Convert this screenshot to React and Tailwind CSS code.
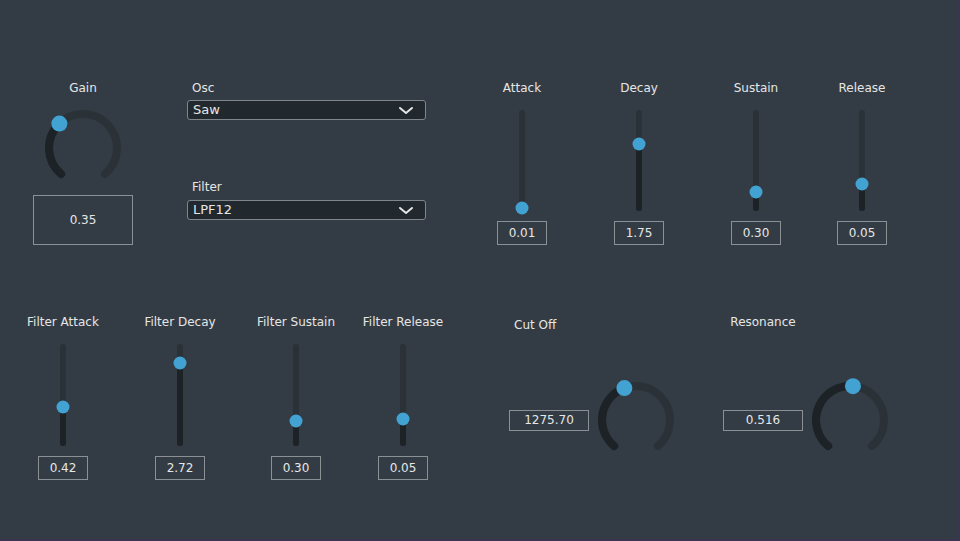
import React from 'react';

const polar = (cx, cy, r, deg) => {
    const a = ((deg - 90) * Math.PI) / 180;
    return [cx + r * Math.cos(a), cy + r * Math.sin(a)];
};

const arc = (cx, cy, r, start, end) => {
    const [x1, y1] = polar(cx, cy, r, start);
    const [x2, y2] = polar(cx, cy, r, end);
    const large = end - start > 180 ? 1 : 0;
    return `M ${x1} ${y1} A ${r} ${r} 0 ${large} 1 ${x2} ${y2}`;
};

function Knob({ angle }) {
    const [tx, ty] = polar(40, 40, 34, angle);
    return (
        <svg width="80" height="80" viewBox="0 0 80 80" className="shrink-0 overflow-visible">
            <path d={arc(40, 40, 34, -140, 140)} fill="none" stroke="#2a3238" strokeWidth="8" strokeLinecap="round" />
            <path d={arc(40, 40, 34, -140, angle)} fill="none" stroke="#1c2226" strokeWidth="8" strokeLinecap="round" />
            <circle cx={tx} cy={ty} r="8" fill="#42a3d2" />
        </svg>
    );
}

function ValueBox({ value, className }) {
    return (
        <div className={`flex items-center justify-center border border-[#8a9094] text-[12px] text-[#e6e6e6] ${className}`}>
            {value}
        </div>
    );
}

function Slider({ label, value, thumb, height, className }) {
    return (
        <div className={`flex w-24 flex-col items-center ${className}`}>
            <div className="h-[14px] whitespace-nowrap text-[12px] leading-[14px] text-[#e6e6e6]">{label}</div>
            <div className="relative mt-[15px] w-[6px] rounded-full bg-[#2a3238]" style={{ height }}>
                <div className="absolute bottom-0 left-0 w-full rounded-full bg-[#1c2226]" style={{ height: height - thumb }} />
                <div className="absolute left-1/2 h-[13px] w-[13px] -translate-x-1/2 -translate-y-1/2 rounded-full bg-[#42a3d2]" style={{ top: thumb }} />
            </div>
            <ValueBox value={value} className="mt-[10px] h-[24px] w-[50px]" />
        </div>
    );
}

function Dropdown({ text }) {
    return (
        <div className="flex h-[20px] items-center justify-between rounded-[3px] border border-[#80868b] bg-[#22292e] pl-[5px] pr-[11px] text-[13px] text-[#e6e6e6]">
            <span>{text}</span>
            <svg width="16" height="9" viewBox="0 0 16 9">
                <polyline points="2,2 8,7 14,2" fill="none" stroke="#e6e6e6" strokeWidth="2" strokeLinecap="round" strokeLinejoin="round" />
            </svg>
        </div>
    );
}

export default function App() {
    return (
        <div className="h-[541px] w-[960px] overflow-hidden border-b-2 border-r-2 border-[#3a3652] bg-[#333c44] font-['DejaVu_Sans',sans-serif]">
            <div className="flex items-start pt-[81px]">
                <div className="ml-[33px] flex w-[100px] flex-col items-center">
                    <div className="h-[14px] text-[12px] leading-[14px] text-[#e6e6e6]">Gain</div>
                    <div className="mt-[13px]">
                        <Knob angle={-44} />
                    </div>
                    <ValueBox value="0.35" className="mt-[7px] h-[50px] w-[100px]" />
                </div>

                <div className="ml-[54px] flex w-[239px] flex-col">
                    <div className="h-[14px] pl-[5px] text-[12px] leading-[14px] text-[#e6e6e6]">Osc</div>
                    <div className="mt-[5px]">
                        <Dropdown text="Saw" />
                    </div>
                    <div className="mt-[60px] h-[14px] pl-[5px] text-[12px] leading-[14px] text-[#e6e6e6]">Filter</div>
                    <div className="mt-[6px]">
                        <Dropdown text="LPF12" />
                    </div>
                </div>

                <Slider label="Attack" value="0.01" thumb={98} height={101} className="ml-[48px]" />
                <Slider label="Decay" value="1.75" thumb={34} height={101} className="ml-[21px]" />
                <Slider label="Sustain" value="0.30" thumb={82} height={101} className="ml-[21px]" />
                <Slider label="Release" value="0.05" thumb={74} height={101} className="ml-[10px]" />
            </div>

            <div className="mt-[70px] flex items-start">
                <Slider label="Filter Attack" value="0.42" thumb={63} height={102} className="ml-[15px]" />
                <Slider label="Filter Decay" value="2.72" thumb={19} height={102} className="ml-[21px]" />
                <Slider label="Filter Sustain" value="0.30" thumb={77} height={102} className="ml-[20px]" />
                <Slider label="Filter Release" value="0.05" thumb={75} height={102} className="ml-[11px]" />

                <div className="ml-[58px] flex flex-col">
                    <div className="mt-[3px] h-[14px] pl-[5px] text-[12px] leading-[14px] text-[#e6e6e6]">Cut Off</div>
                    <div className="mt-[48px] flex items-center gap-[7px]">
                        <ValueBox value="1275.70" className="h-[21px] w-[80px]" />
                        <Knob angle={-20} />
                    </div>
                </div>

                <div className="ml-[47px] flex flex-col">
                    <div className="h-[14px] w-[80px] text-center text-[12px] leading-[14px] text-[#e6e6e6]">Resonance</div>
                    <div className="mt-[51px] flex items-center gap-[7px]">
                        <ValueBox value="0.516" className="h-[21px] w-[80px]" />
                        <Knob angle={5} />
                    </div>
                </div>
            </div>
        </div>
    );
}
